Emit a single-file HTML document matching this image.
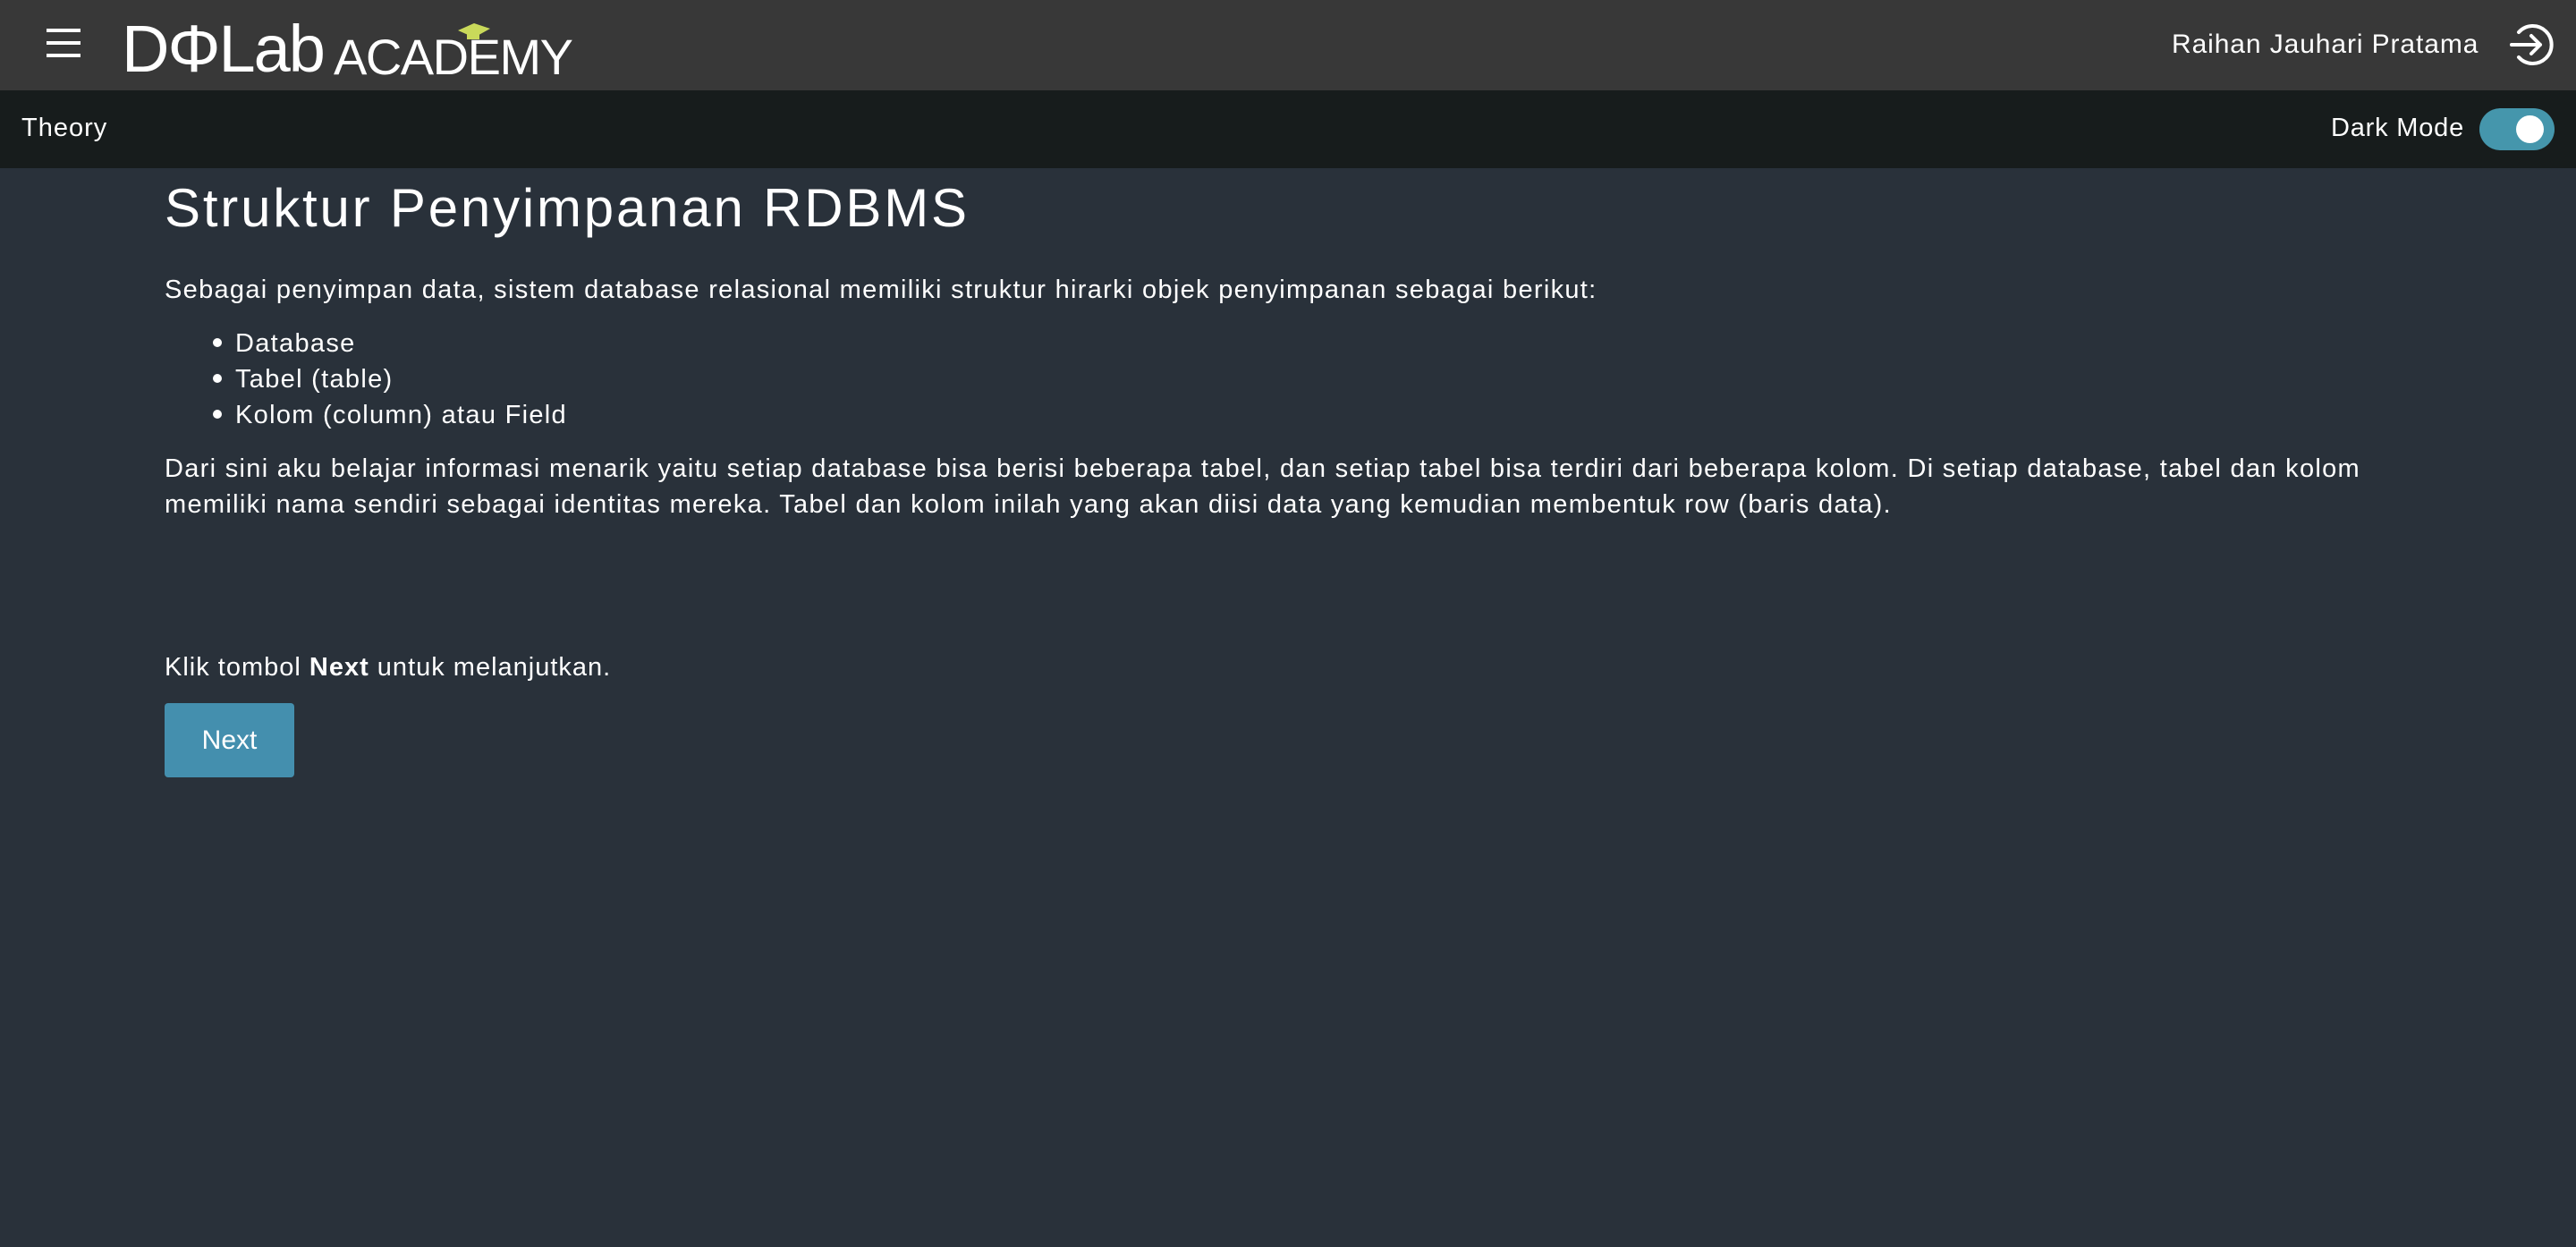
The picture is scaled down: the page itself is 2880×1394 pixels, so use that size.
<!DOCTYPE html>
<html><head><meta charset="utf-8"><style>
*{margin:0;padding:0;box-sizing:border-box}
html,body{width:2880px;height:1394px;overflow:hidden;background:#29313a;font-family:"Liberation Sans",sans-serif;color:#fff}
.a{position:absolute;white-space:nowrap}
.hdr{position:absolute;left:0;top:0;width:2880px;height:101px;background:#383838}
.bar{position:absolute;left:0;top:101px;width:2880px;height:87px;background:#171c1c}
.p{font-size:29px;line-height:40px;letter-spacing:1.3px}
</style></head><body>
<div class="hdr"></div><div class="bar"></div>
<svg class="a" style="left:50px;top:30px" width="44" height="36"><g stroke="#fff" stroke-width="4"><line x1="2" y1="4" x2="40" y2="4"/><line x1="2" y1="18" x2="40" y2="18"/><line x1="2" y1="32" x2="40" y2="32"/></g></svg>
<div class="a" style="left:136px;top:18px;font-size:74px;line-height:74px;letter-spacing:-2px">DΦLab</div>
<div class="a" style="left:373px;top:36px;font-size:56px;line-height:56px;letter-spacing:-1.5px">ACADEMY</div>
<svg class="a" style="left:510px;top:24px" width="40" height="22"><polygon points="2,10 20,2 38,8 20,18" fill="#c9d95a"/><rect x="12" y="12" width="14" height="8" fill="#c9d95a"/></svg>
<div class="a" style="left:2428px;top:31px;font-size:30px;line-height:38px;letter-spacing:0.9px">Raihan Jauhari Pratama</div>
<svg class="a" style="left:2804px;top:24px" width="52" height="52" viewBox="0 0 52 52" fill="none" stroke="#fff" stroke-width="4" stroke-linecap="round" stroke-linejoin="round"><path d="M12 12A21 21 0 1 1 12 40"/><path d="M4 26H36M26 16L36 26L26 36"/></svg>
<div class="a" style="left:24px;top:127px;font-size:29px;line-height:32px;letter-spacing:1px">Theory</div>
<div class="a" style="left:2606px;top:126px;font-size:29px;line-height:34px;letter-spacing:0.8px">Dark Mode</div>
<div class="a" style="left:2772px;top:121px;width:84px;height:47px;border-radius:24px;background:#4596ac"></div>
<div class="a" style="left:2813px;top:129px;width:31px;height:31px;border-radius:50%;background:#fff"></div>
<div class="a" style="left:184px;top:198px;font-size:60px;line-height:70px;letter-spacing:2.8px">Struktur Penyimpanan RDBMS</div>
<div class="a p" style="left:184px;top:304px">Sebagai penyimpan data, sistem database relasional memiliki struktur hirarki objek penyimpanan sebagai berikut:</div>
<div class="a p" style="left:263px;top:364px">Database</div>
<div class="a p" style="left:263px;top:404px">Tabel (table)</div>
<div class="a p" style="left:263px;top:444px">Kolom (column) atau Field</div>
<div class="a" style="left:238px;top:378px;width:10px;height:10px;border-radius:50%;background:#fff"></div>
<div class="a" style="left:238px;top:418px;width:10px;height:10px;border-radius:50%;background:#fff"></div>
<div class="a" style="left:238px;top:458px;width:10px;height:10px;border-radius:50%;background:#fff"></div>
<div class="a p" style="left:184px;top:504px">Dari sini aku belajar informasi menarik yaitu setiap database bisa berisi beberapa tabel, dan setiap tabel bisa terdiri dari beberapa kolom. Di setiap database, tabel dan kolom<br>memiliki nama sendiri sebagai identitas mereka. Tabel dan kolom inilah yang akan diisi data yang kemudian membentuk row (baris data).</div>
<div class="a p" style="left:184px;top:726px;letter-spacing:1px">Klik tombol <b>Next</b> untuk melanjutkan.</div>
<div class="a" style="left:184px;top:786px;width:145px;height:83px;border-radius:4px;background:#448fae;font-size:30px;line-height:83px;text-align:center">Next</div>
</body></html>
